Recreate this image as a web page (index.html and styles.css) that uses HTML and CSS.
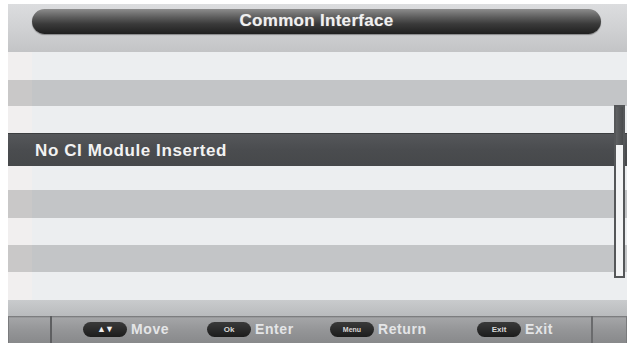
FILE: index.html
```html
<!DOCTYPE html>
<html>
<head>
<meta charset="utf-8">
<link rel="stylesheet" href="styles.css">
</head>
<body>
<div class="tv">
  <div class="header">
    <div class="title-pill">Common Interface</div>
  </div>
  <div class="list">
    <div class="row light h28"></div>
    <div class="row grey h26"></div>
    <div class="row light h27"></div>
    <div class="row selected">No CI Module Inserted</div>
    <div class="row light h24"></div>
    <div class="row grey h28"></div>
    <div class="row light h27"></div>
    <div class="row grey h27"></div>
    <div class="row light h28"></div>
    <div class="scrollbar"><div class="thumb"></div></div>
  </div>
  <div class="spacer"></div>
  <div class="footer">
    <div class="end-box left"></div>
    <div class="keys">
      <div class="key"><span class="btn arrows">▲▼</span><span class="label">Move</span></div>
      <div class="key"><span class="btn">Ok</span><span class="label">Enter</span></div>
      <div class="key"><span class="btn small">Menu</span><span class="label">Return</span></div>
      <div class="key"><span class="btn">Exit</span><span class="label">Exit</span></div>
    </div>
    <div class="end-box right"></div>
  </div>
</div>
</body>
</html>
```

FILE: styles.css
```css
html, body {
  margin: 0;
  padding: 0;
  background: #ffffff;
  width: 632px;
  height: 348px;
  overflow: hidden;
  font-family: "Liberation Sans", Arial, sans-serif;
}

.tv {
  width: 619px;
  margin: 4px 0 0 8px;
  display: flex;
  flex-direction: column;
}

.header {
  height: 48px;
  box-sizing: border-box;
  padding: 5px 26px 0 24px;
  background: linear-gradient(to bottom, #dcdddf 0%, #cfd0d2 55%, #c3c4c6 100%);
  display: flex;
  align-items: flex-start;
}

.title-pill {
  flex: 1;
  height: 25px;
  border-radius: 13px;
  background: linear-gradient(to bottom, #8c8c8c 0%, #5a5a5a 35%, #3a3a3a 60%, #1f1f1f 100%);
  box-shadow: 0 1px 1px rgba(0,0,0,0.35);
  color: #f0f0f0;
  font-weight: bold;
  font-size: 17px;
  letter-spacing: 0.3px;
  line-height: 23px;
  text-align: center;
  text-shadow: 0 0 1px rgba(255,255,255,0.4);
}

.list {
  position: relative;
  display: flex;
  flex-direction: column;
}

.row {
  box-sizing: border-box;
}

.light {
  background: linear-gradient(to right, #f1efef 0, #f1efef 24px, #eceef0 24px);
}

.grey {
  background: linear-gradient(to right, #c9c8c8 0, #c9c8c8 24px, #c3c5c7 24px);
}

.h24 { height: 24px; }
.h26 { height: 26px; }
.h27 { height: 27px; }
.h28 { height: 28px; }

.selected {
  height: 33px;
  background: linear-gradient(to bottom, #55575a 0%, #4a4c4f 50%, #46484a 100%);
  color: #f2f2f2;
  font-weight: bold;
  font-size: 17px;
  letter-spacing: 0.6px;
  line-height: 34px;
  padding-left: 27px;
  border-top: 1px solid #3c3e40;
}

.scrollbar {
  position: absolute;
  left: 606px;
  top: 53px;
  width: 11px;
  height: 173px;
  box-sizing: border-box;
  border: 2px solid #555759;
  background: #f3f4f5;
}

.thumb {
  height: 38px;
  background: linear-gradient(to right, #606264, #4a4c4e);
}

.spacer {
  height: 16px;
  background: linear-gradient(to bottom, #c9cbcd, #b9bbbd);
}

.footer {
  height: 27px;
  display: flex;
  background: linear-gradient(to bottom, #6f7072 0px, #a4a5a7 2px, #959698 50%, #88898b 100%);
}

.end-box {
  box-sizing: border-box;
  height: 27px;
  border-right: 2px solid #5e5f61;
  border-left: 2px solid #6a6b6d;
}

.end-box.left {
  width: 44px;
  border-left: 1px solid #7a7b7d;
}

.end-box.right {
  width: 36px;
  border-right: 1px solid #7a7b7d;
}

.keys {
  flex: 1;
  display: grid;
  grid-template-columns: 124px 123px 147px auto;
  padding-left: 31px;
  align-items: center;
}

.key {
  display: flex;
  align-items: center;
  gap: 4px;
}

.btn {
  width: 44px;
  height: 15px;
  border-radius: 8px;
  background: linear-gradient(to bottom, #3a3a3a, #1c1c1c);
  color: #d8d8d8;
  font-size: 8px;
  font-weight: bold;
  line-height: 15px;
  text-align: center;
}

.btn.arrows {
  font-size: 9px;
  color: #f0f0f0;
  letter-spacing: -1px;
}

.btn.small {
  font-size: 7px;
}

.label {
  color: #e4e5e7;
  font-weight: bold;
  font-size: 14px;
  letter-spacing: 0.6px;
  line-height: 15px;
}
```
